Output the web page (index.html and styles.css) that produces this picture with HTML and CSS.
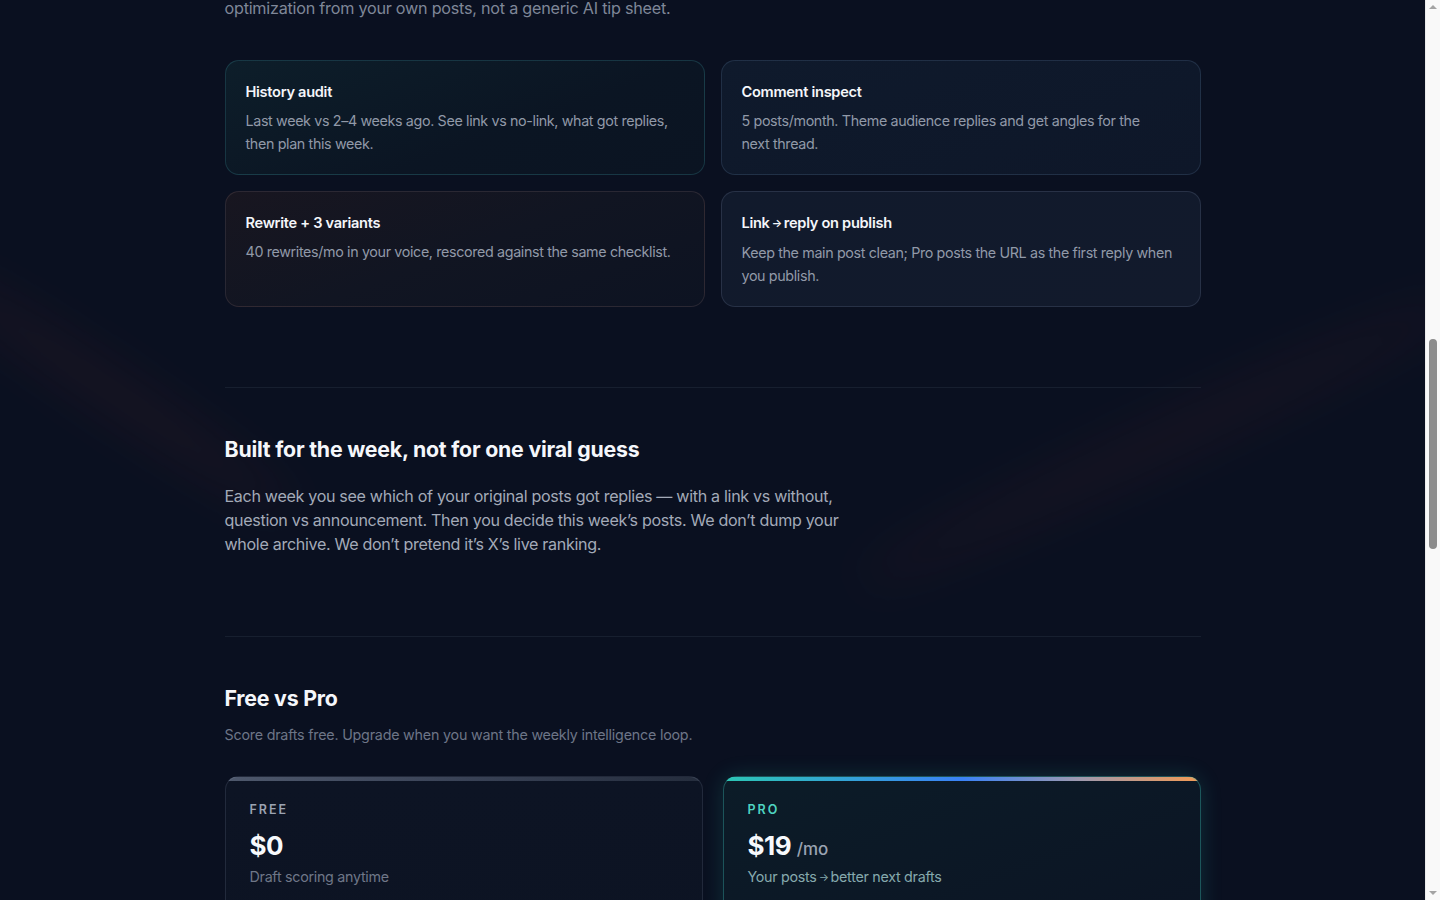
FILE: index.html
```html
<!DOCTYPE html>
<html lang="en">
<head>
<meta charset="utf-8">
<title>Weekly intelligence loop</title>
<link rel="stylesheet" href="styles.css">
</head>
<body>
<div class="bg">
  <div class="glow glow-left" aria-hidden="true"></div>
  <div class="glow glow-right" aria-hidden="true"></div>
  <main class="container">
    <p class="lead">optimization from your own posts, not a generic AI tip sheet.</p>

    <div class="features">
      <div class="feature feature-teal">
        <h3 class="feature-title">History audit</h3>
        <p class="feature-text">Last week vs 2–4 weeks ago. See link vs no-link, what got replies, then plan this week.</p>
      </div>
      <div class="feature feature-navy">
        <h3 class="feature-title">Comment inspect</h3>
        <p class="feature-text">5 posts/month. Theme audience replies and get angles for the next&nbsp;thread.</p>
      </div>
      <div class="feature feature-warm">
        <h3 class="feature-title">Rewrite + 3 variants</h3>
        <p class="feature-text">40 rewrites/mo in your voice, rescored against the same checklist.</p>
      </div>
      <div class="feature feature-slate">
        <h3 class="feature-title">Link<span class="arrow">→</span>reply on publish</h3>
        <p class="feature-text">Keep the main post clean; Pro posts the URL as the first reply when you publish.</p>
      </div>
    </div>

    <section class="section">
      <h2 class="section-title">Built for the week, not for one viral guess</h2>
      <p class="section-body">Each week you see which of your original posts got replies — with a link vs without, question vs announcement. Then you decide this week’s posts. We don’t dump your whole archive. We don’t pretend it’s X’s live ranking.</p>
    </section>

    <section class="section">
      <h2 class="section-title">Free vs Pro</h2>
      <p class="section-sub">Score drafts free. Upgrade when you want the weekly intelligence loop.</p>

      <div class="plans">
        <div class="plan plan-free">
          <div class="plan-label">FREE</div>
          <div class="plan-price">$0</div>
          <div class="plan-tag">Draft scoring anytime</div>
          <ul class="plan-list">
            <li>Unlimited draft scoring</li>
            <li>Checklist feedback</li>
          </ul>
        </div>
        <div class="plan plan-pro">
          <div class="plan-label">PRO</div>
          <div class="plan-price">$19 <span class="per">/mo</span></div>
          <div class="plan-tag">Your posts<span class="arrow">→</span>better next drafts</div>
          <ul class="plan-list">
            <li>History audit</li>
            <li>Comment inspect</li>
            <li>Rewrite + 3 variants</li>
          </ul>
        </div>
      </div>
    </section>
  </main>
</div>
<div class="scrollbar" aria-hidden="true">
  <span class="sb-arrow sb-up"></span>
  <span class="sb-thumb"></span>
  <span class="sb-arrow sb-down"></span>
</div>
</body>
</html>
```

FILE: styles.css
```css
* { box-sizing: border-box; }

html, body {
  margin: 0;
  padding: 0;
  background: #0a1020;
}

body {
  font-family: Inter, "Noto Sans", "Liberation Sans", sans-serif;
  color: #e8ecf3;
  -webkit-font-smoothing: antialiased;
  padding-right: 15px;
}

.bg {
  position: relative;
  min-height: 1900px;
  overflow: hidden;
  background: #0a1020;
}

.glow {
  position: absolute;
  border-radius: 50%;
  filter: blur(22px);
  pointer-events: none;
  z-index: 0;
}

.glow-left {
  left: -110px;
  top: 370px;
  width: 440px;
  height: 40px;
  transform: rotate(34deg);
  background: rgba(120, 45, 45, 0.13);
}

.glow-right {
  left: 830px;
  top: 420px;
  width: 660px;
  height: 44px;
  transform: rotate(-25deg);
  background: rgba(120, 45, 45, 0.11);
}

.container {
  position: relative;
  z-index: 1;
  width: 976px;
  margin: 0 auto;
  padding-bottom: 400px;
}

.lead {
  margin: -4px 0 0;
  font-size: 16.2px;
  line-height: 24px;
  color: #7f8798;
  letter-spacing: -0.015em;
}

.features {
  margin-top: 40px;
  display: grid;
  grid-template-columns: 1fr 1fr;
  gap: 16px 16px;
}

.feature {
  border-radius: 14px;
  padding: 20px 20px 19px;
  border: 1px solid rgba(148, 163, 184, 0.14);
}

.feature-teal {
  border-color: rgba(56, 140, 150, 0.28);
  background: linear-gradient(160deg, #0d1e2a 0%, #0b1523 60%, #0b1422 100%);
}

.feature-navy {
  border-color: rgba(100, 130, 170, 0.22);
  background: linear-gradient(160deg, #0f1a2c 0%, #0e1729 100%);
}

.feature-warm {
  border-color: rgba(150, 120, 120, 0.2);
  background: linear-gradient(160deg, #181620 0%, #111522 50%, #0d1322 100%);
}

.feature-slate {
  border-color: rgba(130, 145, 175, 0.2);
  background: linear-gradient(160deg, #111a2c 0%, #121a2c 100%);
}

.feature-title {
  margin: 0;
  font-size: 14.6px;
  line-height: 22px;
  font-weight: 600;
  color: #f4f6fa;
  letter-spacing: -0.02em;
}

.arrow {
  font-size: 0.75em;
  padding: 0 2px;
  position: relative;
  top: -1px;
}

.feature-text {
  margin: 7px 0 0;
  font-size: 14.3px;
  line-height: 22.5px;
  color: #9199a8;
  letter-spacing: -0.025em;
}

.section {
  margin-top: 80px;
  padding-top: 47px;
  border-top: 1px solid rgba(148, 163, 184, 0.1);
}

.section-title {
  margin: 0;
  font-size: 21.3px;
  line-height: 28px;
  font-weight: 700;
  color: #f5f7fb;
  letter-spacing: -0.01em;
}

.section-body {
  margin: 21px 0 0;
  max-width: 640px;
  font-size: 16.1px;
  line-height: 24px;
  color: #a3aab8;
  letter-spacing: -0.02em;
}

.section-sub {
  margin: 12px 0 0;
  font-size: 14.3px;
  line-height: 22px;
  color: #6d7587;
  letter-spacing: -0.015em;
}

.plans {
  margin-top: 30px;
  display: grid;
  grid-template-columns: 1fr 1fr;
  gap: 20px;
}

.plan {
  border-radius: 14px;
  padding: 25px 24px 28px;
  min-height: 360px;
}

.plan-free {
  border: 1px solid rgba(148, 163, 184, 0.16);
  background:
    linear-gradient(90deg, #4e586c 0%, #394256 50%, #252d3d 100%) top / 100% 4px no-repeat,
    linear-gradient(180deg, #0d1424 0%, #0c1322 100%);
}

.plan-pro {
  border: 1px solid rgba(60, 200, 190, 0.35);
  background:
    linear-gradient(90deg, #2cc6b4 0%, #3b82f6 50%, #a09aae 75%, #f39a54 100%) top / 100% 4px no-repeat,
    linear-gradient(160deg, #0c1c28 0%, #0c1524 55%, #131423 100%);
  box-shadow: 0 0 22px rgba(45, 212, 191, 0.16);
}

.plan-label {
  font-size: 12.5px;
  line-height: 16px;
  letter-spacing: 0.16em;
  font-weight: 600;
  color: #9ba3b2;
}

.plan-pro .plan-label {
  color: #4fd4c2;
}

.plan-price {
  margin-top: 11px;
  height: 34px;
  font-size: 26px;
  line-height: 34px;
  font-weight: 700;
  color: #f7f9fc;
  letter-spacing: -0.02em;
}

.per {
  font-size: 17px;
  line-height: 1;
  font-weight: 500;
  color: #9aa3b2;
  letter-spacing: 0;
}

.plan-tag {
  margin-top: 3px;
  font-size: 14.3px;
  line-height: 22px;
  color: #6f7788;
  letter-spacing: -0.02em;
}

.plan-pro .plan-tag {
  color: #86a9ad;
}

.plan-list {
  margin: 24px 0 0;
  padding: 0;
  list-style: none;
  font-size: 14.5px;
  line-height: 28px;
  color: #a3aab8;
}

.scrollbar {
  position: fixed;
  top: 0;
  right: 0;
  width: 15px;
  height: 100vh;
  background: #f9f9f9;
  border-left: 1px solid #ececec;
  z-index: 10;
}

.sb-thumb {
  position: absolute;
  left: 3px;
  top: 339px;
  width: 8px;
  height: 210px;
  border-radius: 4px;
  background: #8c8c8c;
}

.sb-arrow {
  position: absolute;
  left: 3px;
  width: 0;
  height: 0;
  border-left: 4px solid transparent;
  border-right: 4px solid transparent;
}

.sb-up {
  top: 5px;
  border-bottom: 4px solid #a3a3a3;
}

.sb-down {
  bottom: 5px;
  border-top: 4px solid #a3a3a3;
}
```
